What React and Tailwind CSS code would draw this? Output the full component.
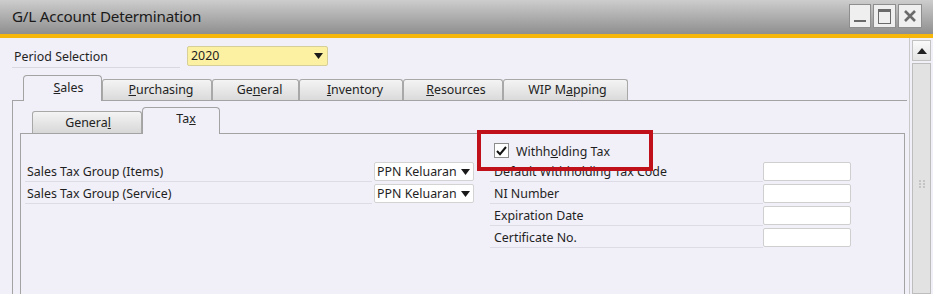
import React from "react";

const Arrow = () => (
  <svg width="9" height="6" viewBox="0 0 9 6" className="shrink-0">
    <path d="M0 0 H9 L4.5 6 Z" fill="#1a1a1a" />
  </svg>
);

function Tab({ children, w, selected, pl }) {
  return selected ? (
    <div
      className={`relative z-10 h-[26px] ${w} ${pl} shrink-0 rounded-t-[4px] border border-b-0 border-[#a3a3a3] bg-[#f1eff8] flex items-center justify-center text-[#222]`}
    >
      {children}
    </div>
  ) : (
    <div
      className={`h-[22px] ${w} ${pl} shrink-0 rounded-t-[3px] border border-b-0 border-[#a8a8a8] bg-gradient-to-b from-[#f4f4f4] to-[#d9d9d9] flex items-center justify-center text-[#222]`}
    >
      {children}
    </div>
  );
}

function SubTab({ children, w, selected, pl }) {
  return selected ? (
    <div
      className={`relative z-10 h-[27px] ${w} ${pl} shrink-0 rounded-t-[4px] border border-b-0 border-[#a3a3a3] bg-[#f1eff8] flex items-center justify-center pb-[3px] text-[#222]`}
    >
      {children}
    </div>
  ) : (
    <div
      className={`h-[23px] ${w} ${pl} shrink-0 rounded-t-[3px] border border-b-0 border-[#a8a8a8] bg-gradient-to-b from-[#f4f4f4] to-[#d6d6d6] flex items-center justify-center text-[#222]`}
    >
      {children}
    </div>
  );
}

function LeftRow({ label, value }) {
  return (
    <div className="flex items-start h-[22px]">
      <div className="w-[347px] h-[20px] border-b border-[#dddbe5] pl-[2px] leading-[19px]">
        {label}
      </div>
      <div className="ml-[2px] w-[100px] h-[19px] bg-white border border-[#d3d3d3] rounded-[2px] flex items-center justify-between pl-[2px] pr-[3px] leading-[17px] whitespace-nowrap">
        <span>{value}</span>
        <Arrow />
      </div>
    </div>
  );
}

function RightRow({ label }) {
  return (
    <div className="flex items-start h-[22px]">
      <div className="w-[273px] h-[20px] border-b border-[#dddbe5] pl-[4px] leading-[19px] whitespace-nowrap">
        {label}
      </div>
      <div className="w-[88px] h-[19px] bg-white border border-[#cfcfcf] rounded-[2px]" />
    </div>
  );
}

export default function App() {
  return (
    <div className="w-[933px] h-[294px] overflow-hidden bg-[#f1eff8] font-['Noto_Sans',sans-serif] text-[12.4px] text-[#1f1f1f]">
      {/* Title bar */}
      <div className="h-[38px] border-b-4 border-[#f6b60a] bg-gradient-to-b from-[#cdcdcd] to-[#8f8f8f] flex items-center justify-between">
        <div className="pl-[12px] text-[15.2px] text-[#1a1a1a] leading-none pb-[1px] tracking-[-0.2px]">
          G/L Account Determination
        </div>
        <div className="flex gap-[2px] pr-[11px] pb-[2px]">
          <div className="w-[22px] h-[24px] bg-[#efefef] border border-[#8e8e8e] flex items-end justify-center pb-[5px]">
            <div className="w-[12px] h-[2px] bg-[#6a6a6a]" />
          </div>
          <div className="w-[23px] h-[24px] bg-[#efefef] border border-[#8e8e8e] flex items-center justify-center">
            <div className="w-[13px] h-[15px] border border-t-[3px] border-[#6a6a6a]" />
          </div>
          <div className="w-[24px] h-[24px] bg-[#efefef] border border-[#8e8e8e] flex items-center justify-center">
            <svg width="12" height="12" viewBox="0 0 12 12">
              <path d="M1 1 L11 11 M11 1 L1 11" stroke="#6a6a6a" strokeWidth="2.6" />
            </svg>
          </div>
        </div>
      </div>

      <div className="flex h-[256px]">
        {/* Main area */}
        <div className="w-[909px] flex flex-col">
          {/* Period selection */}
          <div className="mt-[8px] flex items-start">
            <div className="ml-[12px] w-[168px] h-[22px] border-b border-[#d9d7e0] pl-[2px] leading-[21px]">
              Period Selection
            </div>
            <div className="ml-[7px] w-[141px] h-[20px] bg-[#fcf0a2] border border-[#d6cf9a] rounded-[2px] flex items-center justify-between pl-[3px] pr-[4px] leading-[18px]">
              <span>2020</span>
              <Arrow />
            </div>
          </div>

          {/* Main tabs */}
          <div className="mt-[7px] ml-[12px] mr-[2px] pl-[11px] flex items-end h-[26px]">
            <Tab w="w-[79px]" pl="pl-[12px]" selected>
              <span><u>S</u>ales</span>
            </Tab>
            <Tab w="w-[110px]" pl="pl-[8px]">
              <span><u>P</u>urchasing</span>
            </Tab>
            <Tab w="w-[87px]" pl="pl-[8px]">
              <span>Ge<u>n</u>eral</span>
            </Tab>
            <Tab w="w-[104px]" pl="pl-[8px]">
              <span><u>I</u>nventory</span>
            </Tab>
            <Tab w="w-[100px]" pl="pl-[6px]">
              <span><u>R</u>esources</span>
            </Tab>
            <Tab w="w-[125px]" pl="pl-[4px]">
              <span>WIP M<u>a</u>pping</span>
            </Tab>
          </div>

          {/* Outer tab panel */}
          <div className="-mt-px ml-[12px] mr-[2px] flex-1 border-l border-t border-[#a3a3a3] flex flex-col">
            {/* Sub tabs */}
            <div className="mt-[6px] ml-[7px] pl-[12px] flex items-end h-[27px]">
              <SubTab w="w-[110px]" pl="pl-[2px]">
                <span>Genera<u>l</u></span>
              </SubTab>
              <SubTab w="w-[78px]" pl="pl-[10px]" selected>
                <span>Ta<u>x</u></span>
              </SubTab>
            </div>

            {/* Inner panel */}
            <div className="-mt-px ml-[7px] mr-[2px] flex-1 border-l border-t border-r border-[#a3a3a3] relative">
              <div className="flex pt-[7px]">
                <div className="ml-[4px] w-[449px]">
                  <div className="h-[21px]" />
                  <LeftRow label="Sales Tax Group (Items)" value="PPN Keluaran" />
                  <LeftRow label="Sales Tax Group (Service)" value="PPN Keluaran" />
                </div>
                <div className="ml-[16px] w-[361px]">
                  <div className="h-[21px] flex items-start pt-[2px] pl-[4px]">
                    <div className="w-[15px] h-[15px] bg-white border border-[#8c8c8c] flex items-center justify-center">
                      <svg width="11" height="10" viewBox="0 0 11 10">
                        <path d="M1 5 L4 8.2 L10 1" fill="none" stroke="#111" strokeWidth="2" />
                      </svg>
                    </div>
                    <span className="ml-[7px] leading-[17px]">
                      Withh<u>o</u>lding Tax
                    </span>
                  </div>
                  <RightRow label="Default Withholding Tax Code" />
                  <RightRow label="NI Number" />
                  <RightRow label="Expiration Date" />
                  <RightRow label="Certificate No." />
                </div>
              </div>

              {/* Red highlight annotation */}
              <div className="absolute left-[456px] top-[-4px] w-[176px] h-[41px] border-4 border-[#c0111b]" />
            </div>
          </div>
        </div>

        {/* Scrollbar */}
        <div className="w-[24px] border-l border-[#c9c9c9] bg-[#f1eff8] flex flex-col px-[2px] pt-[2px]">
          <div className="h-[21px] border border-[#c2c2c2] bg-gradient-to-b from-[#fafafa] to-[#e4e4e4] flex items-center justify-center">
            <svg width="10" height="6" viewBox="0 0 10 6">
              <path d="M0 6 H10 L5 0 Z" fill="#222" />
            </svg>
          </div>
          <div className="mt-[2px] flex-1 border border-[#bdbdbd] bg-[#e2e2e2] flex justify-center pt-[116px]">
            <div className="grid grid-cols-2 gap-x-[2px] gap-y-[1px] h-[8px]">
              <div className="w-[2px] h-[2px] bg-[#c4c4c4]" />
              <div className="w-[2px] h-[2px] bg-[#c4c4c4]" />
              <div className="w-[2px] h-[2px] bg-[#c4c4c4]" />
              <div className="w-[2px] h-[2px] bg-[#c4c4c4]" />
              <div className="w-[2px] h-[2px] bg-[#c4c4c4]" />
              <div className="w-[2px] h-[2px] bg-[#c4c4c4]" />
            </div>
          </div>
        </div>
      </div>
    </div>
  );
}
